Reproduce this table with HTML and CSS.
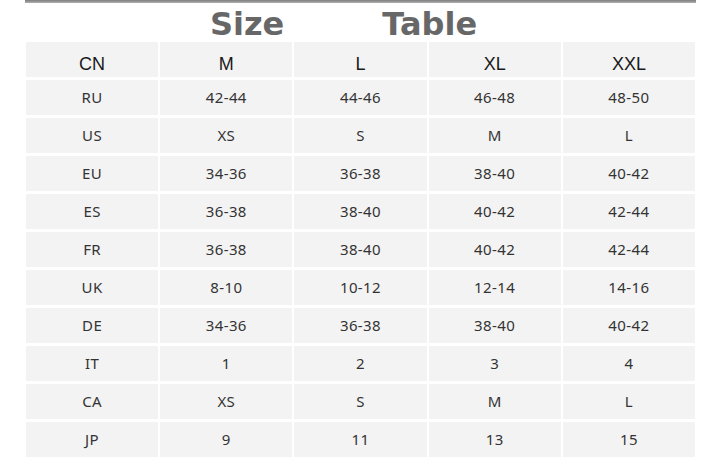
FILE: index.html
```html
<!DOCTYPE html>
<html>
<head>
<meta charset="utf-8">
<link rel="stylesheet" href="styles.css">
</head>
<body>
<div class="page">
  <div class="topbar"></div>
  <div class="title"><span>Size</span><span>Table</span></div>
  <div class="table">
    <div class="cell head">CN</div><div class="cell head">M</div><div class="cell head">L</div><div class="cell head">XL</div><div class="cell head">XXL</div>
    <div class="cell">RU</div><div class="cell">42-44</div><div class="cell">44-46</div><div class="cell">46-48</div><div class="cell">48-50</div>
    <div class="cell">US</div><div class="cell">XS</div><div class="cell">S</div><div class="cell">M</div><div class="cell">L</div>
    <div class="cell">EU</div><div class="cell">34-36</div><div class="cell">36-38</div><div class="cell">38-40</div><div class="cell">40-42</div>
    <div class="cell">ES</div><div class="cell">36-38</div><div class="cell">38-40</div><div class="cell">40-42</div><div class="cell">42-44</div>
    <div class="cell">FR</div><div class="cell">36-38</div><div class="cell">38-40</div><div class="cell">40-42</div><div class="cell">42-44</div>
    <div class="cell">UK</div><div class="cell">8-10</div><div class="cell">10-12</div><div class="cell">12-14</div><div class="cell">14-16</div>
    <div class="cell">DE</div><div class="cell">34-36</div><div class="cell">36-38</div><div class="cell">38-40</div><div class="cell">40-42</div>
    <div class="cell">IT</div><div class="cell">1</div><div class="cell">2</div><div class="cell">3</div><div class="cell">4</div>
    <div class="cell">CA</div><div class="cell">XS</div><div class="cell">S</div><div class="cell">M</div><div class="cell">L</div>
    <div class="cell">JP</div><div class="cell">9</div><div class="cell">11</div><div class="cell">13</div><div class="cell">15</div>
  </div>
</div>
</body>
</html>
```
FILE: styles.css
```css
html, body {
  margin: 0;
  padding: 0;
  background: #ffffff;
}
.page {
  width: 720px;
  height: 471px;
  overflow: hidden;
}
.topbar {
  margin-left: 25px;
  width: 671px;
  height: 3px;
  background: linear-gradient(to bottom, #7d7d7d, #b0b0b0);
}
.title {
  display: flex;
  justify-content: center;
  gap: 98px;
  margin-left: 26px;
  width: 669px;
  box-sizing: border-box;
  padding-right: 34px;
  padding-top: 4px;
  height: 39px;
  line-height: 35px;
  font-family: "DejaVu Sans", sans-serif;
  font-weight: bold;
  font-size: 32px;
  color: #676767;
}
.table {
  margin-left: 26px;
  width: 669px;
  display: grid;
  grid-template-columns: repeat(5, 1fr);
  grid-auto-rows: 35px;
  column-gap: 2px;
  row-gap: 3px;
}
.cell {
  background: #f3f3f3;
  display: flex;
  align-items: center;
  justify-content: center;
  font-family: "Noto Sans", "Liberation Sans", sans-serif;
  font-size: 15px;
  letter-spacing: 0.4px;
  color: #333333;
  padding-bottom: 1px;
  box-sizing: border-box;
}
.cell.head {
  font-family: "Liberation Sans", sans-serif;
  font-size: 18px;
  letter-spacing: 0;
  color: #1a1a1a;
  padding-top: 9px;
  padding-bottom: 0;
}
```
